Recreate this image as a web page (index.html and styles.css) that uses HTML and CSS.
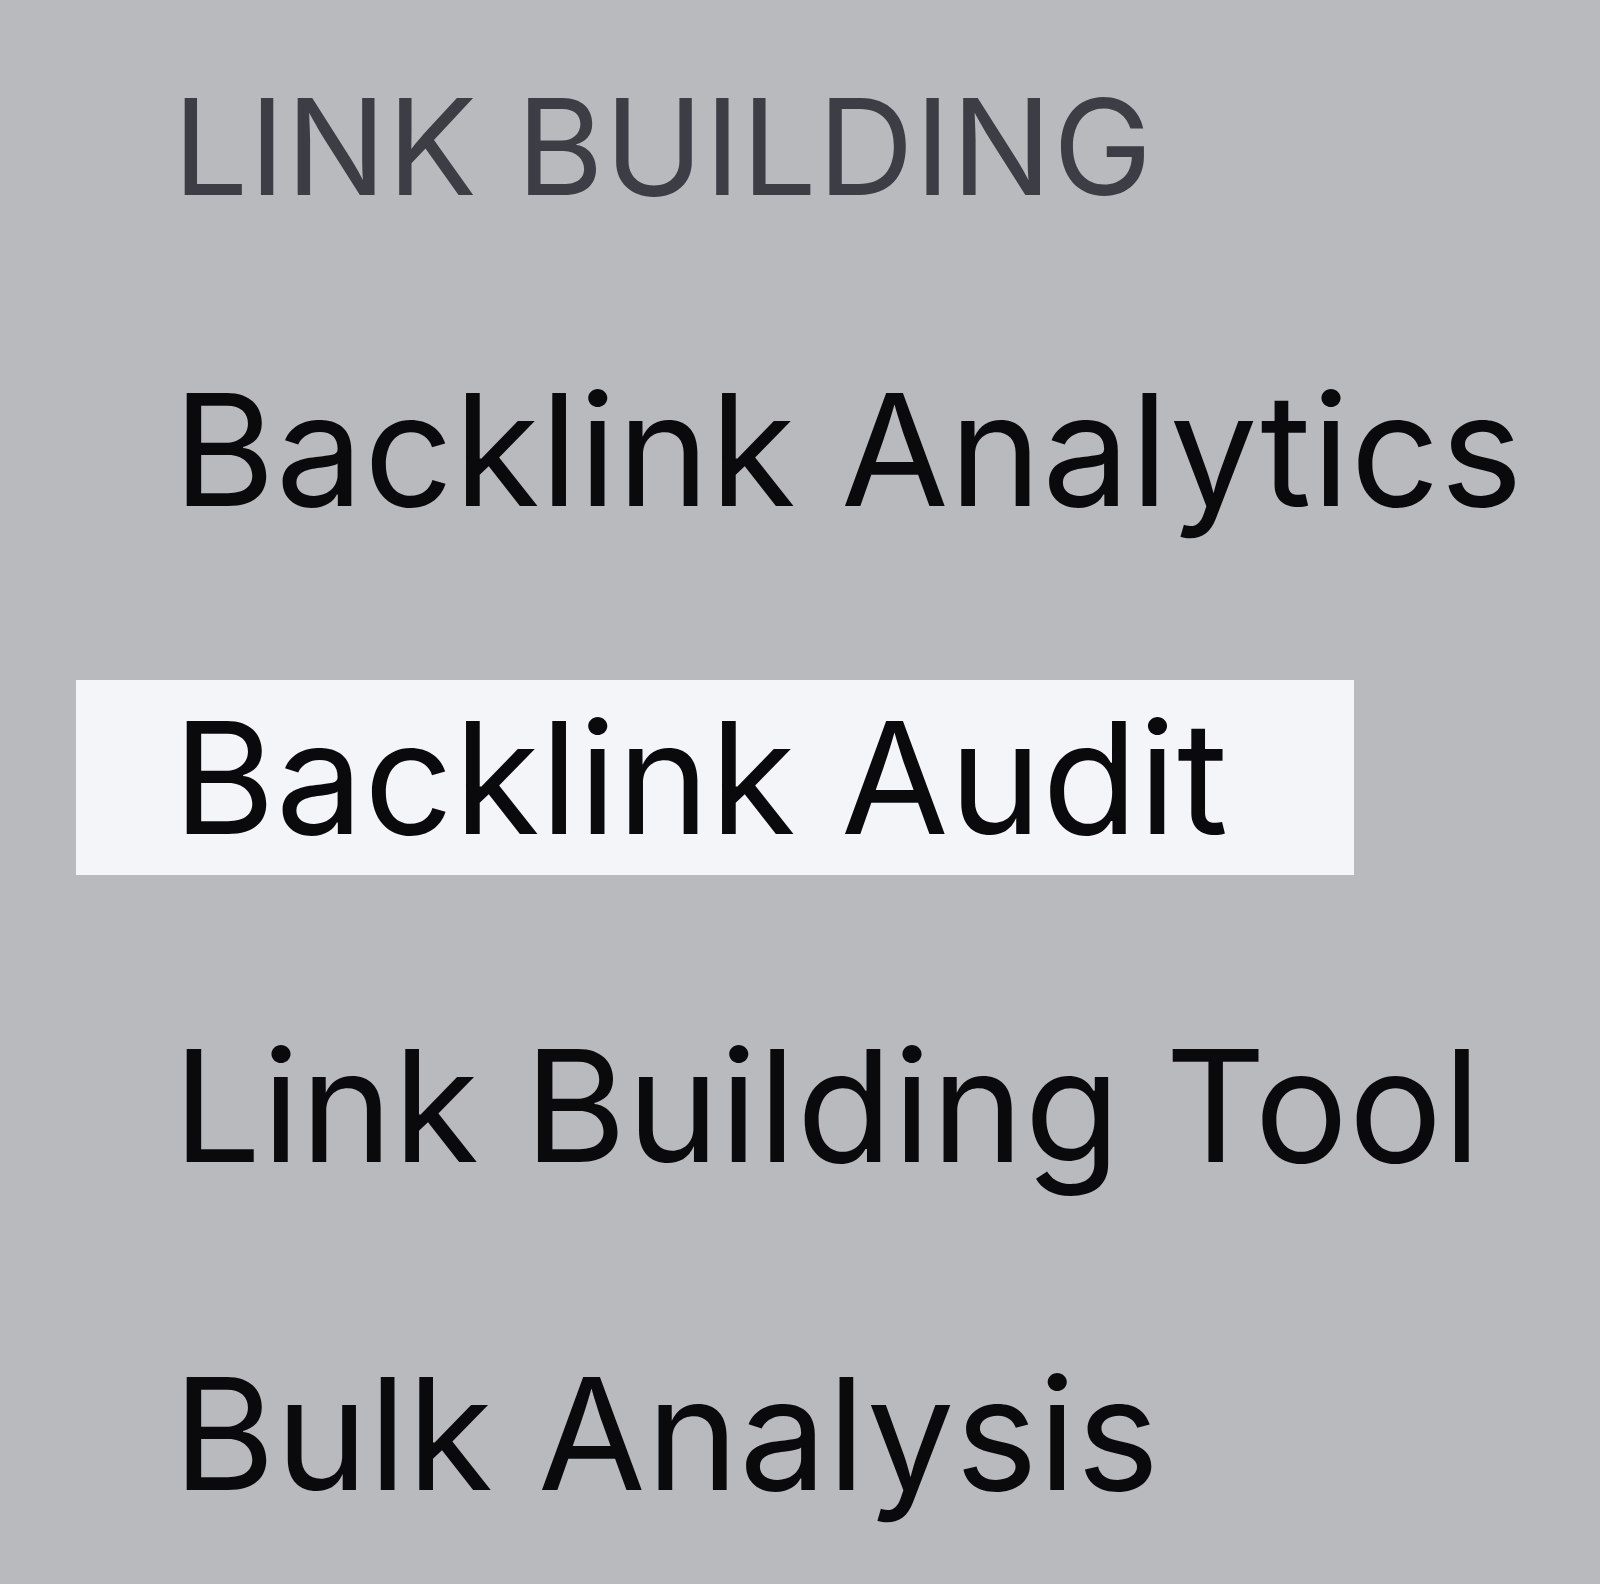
FILE: index.html
```html
<!DOCTYPE html>
<html lang="en">
<head>
	<meta charset="UTF-8">
	<title>Link Building</title>
	<link rel="stylesheet" href="styles.css">
</head>
<body>
	<nav class="menu">
		<div class="menu-title">LINK BUILDING</div>
		<ul class="menu-list">
			<li class="menu-item">Backlink Analytics</li>
			<li class="menu-item menu-item--active">Backlink Audit</li>
			<li class="menu-item">Link Building Tool</li>
			<li class="menu-item">Bulk Analysis</li>
		</ul>
	</nav>
</body>
</html>
```

FILE: styles.css
```css
:root {
	--bg-color:		#b9babe;
	--title-color:		#3d3e45;
	--item-color:		#0a0a0c;
	--active-bg-color:	#f4f5f9;
}

* {
	padding:		0;
	margin:			0;
	box-sizing:		border-box;
}

body {
	background-color:	var(--bg-color);
	font-family:		Inter, "Noto Sans", sans-serif;
	color:			var(--item-color);
	min-height:		1584px;
}

.menu {
	padding-top:		72px;
	padding-left:		76px;
}

.menu-title {
	padding-left:		97px;
	font-size:		133px;
	line-height:		150px;
	letter-spacing:		1.1px;
	color:			var(--title-color);
	font-weight:		400;
}

.menu-list {
	list-style:		none;
	margin-top:		130px;
	display:		flex;
	flex-direction:		column;
	gap:			133px;
}

.menu-item {
	width:			1278px;
	height:			195px;
	padding-left:		97px;
	font-size:		156px;
	line-height:		195px;
	letter-spacing:		0.7px;
	white-space:		nowrap;
}

.menu-item--active {
	background-color:	var(--active-bg-color);
}
```
